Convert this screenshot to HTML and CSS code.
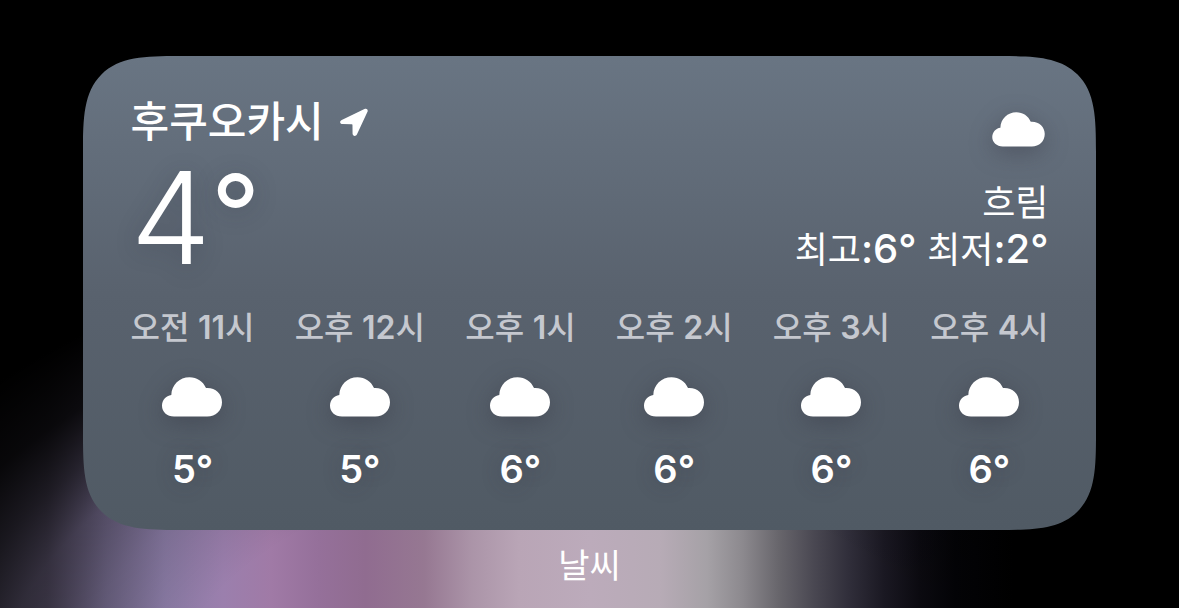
FILE: index.html
```html
<!DOCTYPE html>
<html lang="ko">
<head>
  <meta charset="utf-8">
  <meta name="viewport" content="width=device-width, initial-scale=1">
  <title>날씨</title>
  <link rel="stylesheet" href="styles.css">
</head>
<body>
  <svg class="sprite" aria-hidden="true">
    <symbol id="cloud" viewBox="0 0 60 40">
      <path d="M12 39.500C5 39.500 0 34.800 0 28.700C0 23 4 18.500 9.300 17.900C9.600 8 17.500 .3 27.500 .3C35 .3 41.200 4.500 44 11.100C53 10.400 60 16.600 60 25.200C60 33.500 53.600 39.500 45.300 39.500Z"/>
    </symbol>
    <symbol id="arrow" viewBox="0 0 30 30">
      <path d="M1.800 12.400L25.300 1.100C27.700 0 29.500 1.800 28.300 4.200L17.600 27.200C16.400 29.800 13 29.200 13 26.300L12.900 17.400C12.900 16.900 12.600 16.700 12.100 16.700L2.700 16.600C-.2 16.600-.8 13.700 1.800 12.400Z"/>
    </symbol>
  </svg>
  <main class="screen">
    <article class="widget">
      <header class="current">
        <div class="place">
          <h1 class="city">후쿠오카시 <svg class="arrow"><use href="#arrow"/></svg></h1>
          <p class="temperature">4<span class="ring">°</span></p>
        </div>
        <div class="summary">
          <svg class="cloud cloud-small" role="img" aria-label="흐림"><use href="#cloud"/></svg>
          <p>흐림</p>
          <p>최고<span class="figure">:6° </span>최저<span class="figure">:2°</span></p>
        </div>
      </header>
      <ol class="hours">
        <li class="hour"><span class="time">오전 <span class="number">11</span>시</span><svg class="cloud"><use href="#cloud"/></svg><span class="degree">5°</span></li>
        <li class="hour"><span class="time">오후 <span class="number">12</span>시</span><svg class="cloud"><use href="#cloud"/></svg><span class="degree">5°</span></li>
        <li class="hour"><span class="time">오후 <span class="number">1</span>시</span><svg class="cloud"><use href="#cloud"/></svg><span class="degree">6°</span></li>
        <li class="hour"><span class="time">오후 <span class="number">2</span>시</span><svg class="cloud"><use href="#cloud"/></svg><span class="degree">6°</span></li>
        <li class="hour"><span class="time">오후 <span class="number">3</span>시</span><svg class="cloud"><use href="#cloud"/></svg><span class="degree">6°</span></li>
        <li class="hour"><span class="time">오후 <span class="number">4</span>시</span><svg class="cloud"><use href="#cloud"/></svg><span class="degree">6°</span></li>
      </ol>
    </article>
    <p class="caption">날씨</p>
  </main>
</body>
</html>
```
FILE: styles.css
```css
* {
  box-sizing: border-box;
}

body,
h1,
p,
ol {
  margin: 0;
  padding: 0;
}

body {
  background: #000;
  color: #fff;
  font-family: Inter, "Noto Sans CJK KR", sans-serif;
}

.sprite {
  display: none;
}

.screen {
  min-height: 100vh;
  padding: 56px 7% 0;
  background:
    radial-gradient(ellipse 640px 400px at 560px 720px, transparent 62%, rgba(0, 0, 0, 0.12) 78%, rgba(0, 0, 0, 0.25) 89%, rgba(0, 0, 0, 0.58) 98%, rgba(0, 0, 0, 0.87) 108%, #000 122%),
    linear-gradient(to right, #393544, #453f52 4%, #6d6484 9%, #8b7ca6 14%, #9b7fad 19%, #a07aa6 23%, #95709a 27%, #906c90 31%, #967892 36%, #ab94a8 40%, #b9a5b6 44%, #bcabbb 50%, #b7abb6 56%, #a5a1a6 60%, #8c898e 63%, #68666c 66%, #4a4852 69%, #302e3a 72%, #1a1822 75%, #0b0a10 78%, #030306 81%, #000 86%);
}

.widget {
  padding: 40px 48px 38px;
  border-radius: 66px;
  background: linear-gradient(#697583, #59626e 50%, #505a64);
}

@supports (corner-shape: superellipse(1.7)) {
  .widget {
    border-radius: 96px;
    corner-shape: superellipse(1.7);
  }
}

.current {
  display: flex;
  justify-content: space-between;
}

.city {
  display: flex;
  align-items: center;
  gap: 16px;
  font-size: 42px;
  font-weight: 500;
  line-height: 52px;
}

.arrow {
  width: 29px;
  height: 29px;
  fill: currentColor;
}

.temperature {
  font-size: 128px;
  font-weight: 300;
  line-height: 140px;
  text-shadow: 0 4px 24px rgba(40, 44, 60, 0.25);
}

.ring {
  font-size: 108px;
  font-weight: 400;
  line-height: 1;
  vertical-align: 12px;
}

.summary {
  display: flex;
  flex-direction: column;
  align-items: flex-end;
  padding-top: 16px;
  font-size: 36px;
  line-height: 47px;
}

.figure {
  font-size: 40px;
  font-weight: 500;
  line-height: 1;
}

.cloud {
  width: 60px;
  height: 40px;
  overflow: visible;
  fill: currentColor;
  filter: drop-shadow(0 6px 12px rgba(50, 50, 62, 0.4));
}

.cloud-small {
  width: 53px;
  height: 35px;
  margin: 0 3px 33px 0;
}

.hours {
  display: flex;
  justify-content: space-between;
  margin-top: 20px;
  list-style: none;
}

.hour {
  display: flex;
  flex-direction: column;
  align-items: center;
}

.time {
  color: #c5c8cf;
  font-size: 32px;
  font-weight: 500;
  line-height: 40px;
}

.number {
  font-weight: 600;
}

.hour .cloud {
  margin: 29px 0;
}

.degree {
  font-size: 38px;
  font-weight: 600;
  line-height: 46px;
  text-shadow: 0 2px 20px rgba(50, 50, 62, 0.3);
}

.caption {
  margin-top: 12px;
  font-size: 34px;
  line-height: 48px;
  text-align: center;
}
```
